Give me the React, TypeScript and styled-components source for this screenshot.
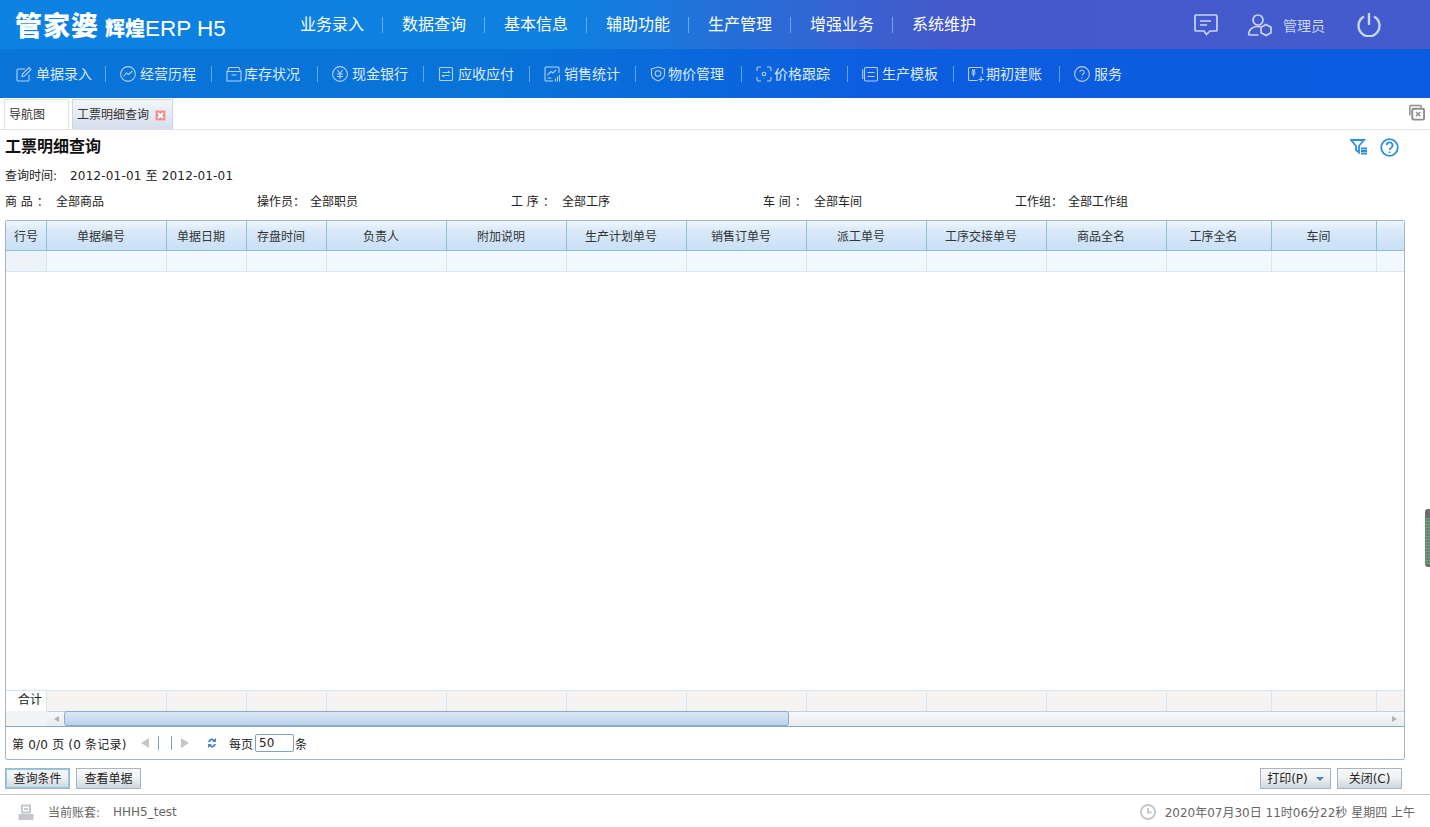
import React from "react";
import styled, { createGlobalStyle } from "styled-components";

const GlobalStyle = createGlobalStyle`
  html, body {
    margin: 0;
    padding: 0;
    height: 100%;
    overflow: hidden;
    background: #fff;
    font-family: "DejaVu Sans", "Noto Sans CJK SC", sans-serif;
    font-size: 12px;
    color: #222;
  }
  * { box-sizing: border-box; }
`;

const Page = styled.div`
  position: relative;
  width: 1430px;
  height: 827px;
  display: flex;
  flex-direction: column;
  overflow: hidden;
`;

const TopBar = styled.header`
  height: 49px;
  display: flex;
  align-items: center;
  background: linear-gradient(90deg, #0c82e2 0%, #0f80e0 40%, #4459cc 66%, #445bcd 100%);
  color: #fff;
`;

const Logo = styled.div`
  width: 300px;
  padding-left: 15px;
  display: flex;
  align-items: baseline;
  white-space: nowrap;
  font-family: "Noto Sans CJK SC", sans-serif;
`;
const LogoMain = styled.span`
  font-size: 27px;
  letter-spacing: 1px;
  font-weight: 900;
  line-height: 34px;
`;
const LogoSub = styled.span`
  font-size: 20px;
  font-weight: 900;
  margin-left: 6px;
`;
const LogoEn = styled.span`
  font-family: "Liberation Sans", sans-serif;
  font-size: 22.5px;
`;

const MainMenu = styled.nav`
  display: flex;
  align-items: center;
  flex: 1;
`;
const MainItem = styled.a`
  font-family: "Noto Sans CJK SC", sans-serif;
  font-size: 16px;
  line-height: 12px;
  height: 16px;
  width: 102px;
  padding-right: 38px;
  white-space: nowrap;
  position: relative;
  &:not(:last-child)::after {
    content: "";
    position: absolute;
    right: 19px;
    top: 0;
    height: 16px;
    width: 1px;
    background: rgba(140, 190, 245, 0.7);
  }
`;

const UserArea = styled.div`
  display: flex;
  align-items: center;
  padding-right: 49px;
  color: #c8d6f6;
`;
const UserName = styled.span`
  font-family: "Noto Sans CJK SC", sans-serif;
  font-size: 14px;
  margin-left: 10px;
  margin-right: 32px;
`;
const UserIcon = styled.svg<{ $gap?: number; $weight?: number }>`
  display: block;
  fill: none;
  stroke: #c8d6f6;
  stroke-width: ${(p) => p.$weight ?? 1.7};
  margin-right: ${(p) => p.$gap ?? 0}px;
`;

const SubBar = styled.nav`
  height: 49px;
  display: flex;
  align-items: center;
  padding-left: 16px;
  background: linear-gradient(90deg, #0874d8 0%, #0873d8 35%, #0d5de0 62%, #0d5be0 100%);
  color: #dfeafb;
`;
const SubItem = styled.a`
  display: flex;
  align-items: flex-start;
  width: 106px;
  height: 16px;
  font-family: "Noto Sans CJK SC", sans-serif;
  font-size: 14px;
  line-height: 14px;
  white-space: nowrap;
  position: relative;
  &:not(:last-child)::after {
    content: "";
    position: absolute;
    left: 89px;
    top: 0;
    height: 16px;
    width: 1px;
    background: rgba(130, 185, 240, 0.75);
  }
`;
const SubIcon = styled.svg<{ $first: boolean; $gap: number }>`
  width: 16px;
  height: 16px;
  margin-left: ${(p) => (p.$first ? 0 : -2)}px;
  margin-right: ${(p) => p.$gap}px;
  flex: none;
  fill: none;
  stroke: #b5cff3;
  stroke-width: 1.1;
`;

const TabBar = styled.div`
  height: 32px;
  display: flex;
  align-items: flex-end;
  padding-left: 4px;
  gap: 3px;
  border-bottom: 1px solid #e2e2e2;
  position: relative;
`;
const Tab = styled.div<{ $active?: boolean }>`
  height: 30px;
  width: ${(p) => (p.$active ? "101px" : "65px")};
  padding: 0 0 2px 4px;
  display: flex;
  align-items: center;
  gap: 6px;
  border: 1px solid #dcdcdc;
  border-color: ${(p) => (p.$active ? "#cdd5e2" : "#e2e2e2")};
  border-bottom: none;
  background: ${(p) => (p.$active ? "linear-gradient(#f4f6fa, #d5dfee)" : "#fff")};
  color: #333;
`;
const TabClose = styled.svg`
  width: 11px;
  height: 11px;
  display: block;
  margin-top: 4px;
`;
const CloseAll = styled.svg`
  position: absolute;
  right: 5px;
  top: 6px;
  width: 17px;
  height: 17px;
  fill: none;
  stroke: #8d8d8d;
  stroke-width: 1.6;
`;

const Content = styled.main`
  flex: 1;
  display: flex;
  flex-direction: column;
  padding: 0 25px 0 5px;
  min-height: 0;
`;
const TitleRow = styled.div`
  height: 31px;
  padding-bottom: 1px;
  display: flex;
  align-items: center;
  justify-content: space-between;
`;
const Title = styled.h1`
  margin: 0;
  font-family: "Noto Sans CJK SC", sans-serif;
  font-size: 16px;
  font-weight: 700;
  color: #111;
`;
const TitleTools = styled.div`
  display: flex;
  align-items: center;
  gap: 12px;
  padding-right: 6px;
  margin-top: 4px;
`;
const ToolIcon = styled.svg`
  display: block;
  fill: none;
  stroke: #2e8fe0;
  stroke-width: 1.8;
`;
const TimeRow = styled.div`
  height: 26px;
  display: flex;
  align-items: center;
  padding-top: 1px;
  color: #222;
`;
const TimeLabel = styled.span`
  width: 65px;
`;
const TimeValue = styled.span`
  letter-spacing: 0.18px;
`;
const FilterRow = styled.div`
  height: 26px;
  display: grid;
  grid-template-columns: 252px 254px 252px 252px 1fr;
  align-items: center;
`;
const FilterCell = styled.div`
  display: flex;
`;
const FilterLabel = styled.span<{ $w: number }>`
  width: ${(p) => p.$w}px;
  white-space: pre;
`;

const GridPanel = styled.section`
  margin-top: 7px;
  width: 1400px;
  height: 540px;
  flex: none;
  border: 1px solid #a3b7c9;
  border-radius: 2px;
  display: flex;
  flex-direction: column;
`;
const HeadRow = styled.div`
  height: 30px;
  display: flex;
  border-bottom: 1px solid #8fc0da;
  background: linear-gradient(#eef6fd 0%, #d9e9f8 35%, #c9e0f6 100%);
`;
const HeadCell = styled.div<{ $w?: number; $lead?: boolean }>`
  width: ${(p) => (p.$w ? `${p.$w}px` : "auto")};
  flex: ${(p) => (p.$w ? "none" : "1")};
  border-right: ${(p) => (p.$w ? "1px solid #8fc0da" : "none")};
  padding-right: ${(p) => (p.$lead ? 0 : 11)}px;
  display: flex;
  align-items: center;
  justify-content: center;
  color: #333;
`;
const DataRow = styled.div<{ $summary?: boolean }>`
  height: 21px;
  display: flex;
  background: ${(p) => (p.$summary ? "#f6f4f2" : "#f1f8fe")};
  border-top: ${(p) => (p.$summary ? "1px solid #d3e7f7" : "none")};
  border-bottom: ${(p) => (p.$summary ? "none" : "1px solid #d3e7f7")};
`;
const DataCell = styled.div<{ $w?: number; $lead?: boolean; $summary?: boolean }>`
  width: ${(p) => (p.$w ? `${p.$w}px` : "auto")};
  flex: ${(p) => (p.$w ? "none" : "1")};
  border-right: ${(p) => (p.$w ? "1px solid #d3e7f7" : "none")};
  background: ${(p) => (p.$lead ? (p.$summary ? "#fff" : "#edf3f9") : "transparent")};
  text-align: right;
  padding-right: 4px;
  line-height: 19px;
  color: #222;
`;
const EmptyBody = styled.div`
  flex: 1;
  background: #fff;
`;
const ScrollRow = styled.div`
  height: 16px;
  display: flex;
  border-bottom: 1px solid #8ba9bd;
`;
const ScrollLead = styled.div`
  width: 41px;
  background: #f2f3f5;
`;
const ScrollTrack = styled.div`
  flex: 1;
  display: flex;
  align-items: center;
  position: relative;
  background: linear-gradient(#f7f8f9, #e9ebee);
  border-top: 1px solid #c3cfe0;
  padding: 0 7px;
  justify-content: space-between;
`;
const ScrollThumb = styled.div`
  position: absolute;
  left: 17px;
  top: -1px;
  bottom: 0;
  width: 725px;
  border: 1px solid #8fa9d0;
  border-radius: 3px;
  background: linear-gradient(#dce8f6, #bcd2ea);
`;
const Arrow = styled.i<{ $dir: "left" | "right"; $size?: number; $color?: string; $gap?: number }>`
  display: block;
  width: 0;
  height: 0;
  margin-left: ${(p) => p.$gap ?? 0}px;
  border-style: solid;
  border-color: transparent;
  border-width: ${(p) => p.$size ?? 3}px;
  ${(p) => (p.$dir === "left" ? "border-left-width: 0;" : "border-right-width: 0;")}
  ${(p) => (p.$dir === "left" ? "border-right-width:" : "border-left-width:")} ${(p) => Math.round((p.$size ?? 3) * 1.6)}px;
  ${(p) => (p.$dir === "left" ? "border-right-color:" : "border-left-color:")} ${(p) => p.$color ?? "#aab4bf"};
`;
const Pager = styled.div`
  height: 32px;
  flex: none;
  display: flex;
  align-items: center;
  padding-left: 6px;
  color: #222;
`;
const PagerInfo = styled.span`
  width: 129px;
  white-space: nowrap;
  letter-spacing: 0.2px;
`;
const PagerBar = styled.span<{ $gap: number }>`
  width: 1px;
  height: 14px;
  margin-left: ${(p) => p.$gap}px;
  background: #7ea4bf;
`;
const RefreshIcon = styled.svg`
  margin-left: 18px;
  fill: #4f86c0;
`;
const PerPage = styled.span`
  margin-left: 12px;
`;
const PageInput = styled.input`
  width: 39px;
  height: 18px;
  margin: 0 1px 0 2px;
  padding: 0 3px;
  border: 1px solid #7ea4bf;
  border-radius: 2px;
  font: inherit;
  color: #222;
`;

const ActionRow = styled.div`
  height: 34px;
  flex: none;
  padding-top: 8px;
  width: 1397px;
  display: flex;
  align-items: flex-start;
  justify-content: space-between;
`;
const ActionGroup = styled.div`
  display: flex;
  gap: 6px;
`;
const ActionButton = styled.button<{ $w: number; $focus?: boolean }>`
  width: ${(p) => p.$w}px;
  height: 21px;
  padding: 0 0 2px;
  border: 1px solid #aab3c1;
  outline: ${(p) => (p.$focus ? "1px solid #7fd0f5" : "none")};
  outline-offset: -2px;
  background: linear-gradient(#f8f9fa, #f0f2f3 45%, #ccd6dc);
  font: inherit;
  color: #222;
  display: flex;
  align-items: center;
  justify-content: center;
  gap: 8px;
`;
const Caret = styled.i`
  width: 0;
  height: 0;
  margin-top: 2px;
  border: 4px solid transparent;
  border-top: 4px solid #4a7fc0;
  border-bottom: none;
`;

const Footer = styled.footer`
  height: 33px;
  flex: none;
  display: flex;
  align-items: center;
  justify-content: space-between;
  border-top: 1px solid #c3cad2;
  padding: 1px 15px 0 18px;
  color: #666;
`;
const FooterSide = styled.div`
  display: flex;
  align-items: center;
`;
const FooterIcon = styled.svg`
  width: 16px;
  height: 16px;
  display: block;
  fill: none;
  stroke: #c4c7cc;
  stroke-width: 2;
`;
const FooterLabel = styled.span`
  margin-left: 14px;
  width: 65px;
`;
const ClockText = styled.span`
  margin-left: 9px;
`;

const SideHandle = styled.div`
  position: absolute;
  right: 0;
  top: 509px;
  width: 5px;
  height: 58px;
  border-radius: 3px 0 0 3px;
  background: repeating-linear-gradient(#4fb577 0 1px, #777c7a 1px 3px);
  border-top: 9px solid #6c6c6c;
  border-bottom: 3px solid #6c6c6c;
`;

const mainMenus = ["业务录入", "数据查询", "基本信息", "辅助功能", "生产管理", "增强业务", "系统维护"];

const subIcons: React.ReactNode[] = [
  <><path d="M13 8.500V14a1 1 0 0 1-1 1H2a1 1 0 0 1-1-1V4a1 1 0 0 1 1-1h7" /><path d="M6 10.500 6.500 8l6.500-6.500 2 2L8.500 10z" /></>,
  <><circle cx="8" cy="8" r="7.400" /><path d="M3.500 10.500l3-3.500 2 1.500L12.500 5" /></>,
  <><path d="M1 5.500h14V15H1z" /><path d="M1.500 5.500 3 1.500h10l1.500 4" /><path d="M5.500 9h5" /></>,
  <><circle cx="8" cy="8" r="7.400" /><path d="M5.500 4 8 7.500 10.500 4M5 8h6M5 10.500h6M8 7.500V13" /></>,
  <><rect x="1.500" y="1.500" width="13" height="13" rx="1" /><path d="M4.500 6.500h7L10 5M11.500 9.500h-7L6 11" /></>,
  <><path d="M15 7V2a1 1 0 0 0-1-1H2a1 1 0 0 0-1 1v12a1 1 0 0 0 1 1h7" /><path d="M3.500 9l3.500-3.500 2 1.500 3-3M3.500 12h4M11.500 15.500v-3M13.500 15.500v-5M15.500 15.500V9" /></>,
  <><path d="M8 1l6.500 2v5.500c0 3-2.500 5-6.500 6.500-4-1.500-6.500-3.500-6.500-6.500V3z" /><circle cx="8" cy="7.500" r="2.800" /></>,
  <><path d="M1 5V2.500A1.500 1.500 0 0 1 2.500 1H5M11 1h2.500A1.500 1.500 0 0 1 15 2.500V5M15 11v2.500a1.500 1.500 0 0 1-1.500 1.500H11M5 15H2.500A1.500 1.500 0 0 1 1 13.500V11" /><circle cx="8" cy="8" r="1.800" /></>,
  <><rect x="2.500" y="1.500" width="13" height="13.500" rx="1.500" /><path d="M.7 3.500v9.500M5.500 6.500h7M5.500 10.500h7" /></>,
  <><path d="M14.500 8V2.500a1 1 0 0 0-1-1h-12a1 1 0 0 0-1 1v11a1 1 0 0 0 1 1h8" /><path d="M4 3.500 5.500 5 7 3.500M3.500 6h4M3.500 8h4M5.500 5v5.500M13 10.500v5.500M10.500 13.500h5.500" /></>,
  <><circle cx="8" cy="8" r="7.400" /><path d="M5.900 6.200a2.100 2.100 0 1 1 3.200 1.800c-.7.400-1.100.8-1.100 1.600" /><path d="M8 11.200v1.200" /></>,
];
const subMenus: [string, number][] = [
  ["单据录入", 4],
  ["经营历程", 4],
  ["库存状况", 2],
  ["现金银行", 4],
  ["应收应付", 4],
  ["销售统计", 4],
  ["物价管理", 2],
  ["价格跟踪", 2],
  ["生产模板", 4],
  ["期初建账", 2],
  ["服务", 4],
];

const columns: [string, number][] = [
  ["行号", 41],
  ["单据编号", 120],
  ["单据日期", 80],
  ["存盘时间", 80],
  ["负责人", 120],
  ["附加说明", 120],
  ["生产计划单号", 120],
  ["销售订单号", 120],
  ["派工单号", 120],
  ["工序交接单号", 120],
  ["商品全名", 120],
  ["工序全名", 105],
  ["车间", 105],
];

const filters: [string, string, number][] = [
  ["商 品 ：", "全部商品", 51],
  ["操作员：", "全部职员", 53],
  ["工 序 ：", "全部工序", 51],
  ["车 间 ：", "全部车间", 51],
  ["工作组：", "全部工作组", 53],
];

const App = () => {
  return (
    <Page>
      <GlobalStyle />
      <TopBar>
        <Logo>
          <LogoMain>管家婆</LogoMain>
          <LogoSub>辉煌</LogoSub>
          <LogoEn>ERP H5</LogoEn>
        </Logo>
        <MainMenu>
          {mainMenus.map((m) => (
            <MainItem key={m}>{m}</MainItem>
          ))}
        </MainMenu>
        <UserArea>
          <UserIcon width="26" height="24" viewBox="0 0 26 24" $gap={28}>
            <path d="M3 2h20a1 1 0 0 1 1 1v14a1 1 0 0 1-1 1h-6l-3.500 3.500L11 18H3a1 1 0 0 1-1-1V3a1 1 0 0 1 1-1z" />
            <path d="M7 8h11M7 12h7" />
          </UserIcon>
          <UserIcon width="26" height="24" viewBox="0 0 26 24">
            <circle cx="11" cy="7" r="5" />
            <path d="M1.500 22c0-5 3.500-8.500 9-8.500 1 0 2 .1 3 .5M1.500 22h10" />
            <path d="M19 11.500l5 2.800v5.400L19 22.500l-5-2.800v-5.400z" />
          </UserIcon>
          <UserName>管理员</UserName>
          <UserIcon width="24" height="25" viewBox="0 0 24 25" $weight={2.4}>
            <path d="M12 1v12" />
            <path d="M7 4.500a10.500 10.500 0 1 0 10 0" />
          </UserIcon>
        </UserArea>
      </TopBar>

      <SubBar>
        {subMenus.map(([m, gap], i) => (
          <SubItem key={m}>
            <SubIcon viewBox="0 0 16 16" $first={i === 0} $gap={gap}>{subIcons[i]}</SubIcon>
            {m}
          </SubItem>
        ))}
      </SubBar>

      <TabBar>
        <Tab>导航图</Tab>
        <Tab $active>
          工票明细查询
          <TabClose viewBox="0 0 11 11">
            <rect x="0" y="0" width="11" height="11" fill="#f3c4c4" />
            <rect x="1" y="1" width="9" height="9" fill="#e98d8f" />
            <path d="M3 3l5 5M8 3l-5 5" stroke="#fff" strokeWidth="2" />
          </TabClose>
        </Tab>
        <CloseAll viewBox="0 0 18 18">
          <path d="M2 12V2.500A1 1 0 0 1 3 1.500h10a1 1 0 0 1 1 1V4" />
          <rect x="4.500" y="5" width="12.500" height="11.500" rx="1.500" strokeWidth="2" />
          <path d="M8.500 8.500l4.500 4.500M13 8.500l-4.500 4.500" />
        </CloseAll>
      </TabBar>

      <Content>
        <TitleRow>
          <Title>工票明细查询</Title>
          <TitleTools>
            <ToolIcon width="18" height="18" viewBox="0 0 18 18">
              <path d="M1 2h13l-5 6v6.500L6 12V8z" />
              <path d="M11 10.500h6M11 13h6M11 15.500h6" />
            </ToolIcon>
            <ToolIcon width="19" height="19" viewBox="0 0 19 19">
              <circle cx="9.500" cy="9.500" r="8.300" />
              <path d="M6.700 7.300a2.900 2.900 0 1 1 4.400 2.400c-1 .6-1.600 1.100-1.600 2.300" />
              <path d="M9.500 13.500v1.500" />
            </ToolIcon>
          </TitleTools>
        </TitleRow>
        <TimeRow>
          <TimeLabel>查询时间:</TimeLabel>
          <TimeValue>2012-01-01 至 2012-01-01</TimeValue>
        </TimeRow>
        <FilterRow>
          {filters.map(([label, value, w]) => (
            <FilterCell key={label}>
              <FilterLabel $w={w}>{label}</FilterLabel>
              {value}
            </FilterCell>
          ))}
        </FilterRow>

        <GridPanel>
          <HeadRow>
            {columns.map(([name, w], i) => (
              <HeadCell key={name} $w={w} $lead={i === 0}>
                {name}
              </HeadCell>
            ))}
            <HeadCell />
          </HeadRow>
          <DataRow>
            {columns.map(([name, w], i) => (
              <DataCell key={name} $w={w} $lead={i === 0} />
            ))}
            <DataCell />
          </DataRow>
          <EmptyBody />
          <DataRow $summary>
            {columns.map(([name, w], i) => (
              <DataCell key={name} $w={w} $lead={i === 0} $summary>
                {i === 0 ? "合计" : ""}
              </DataCell>
            ))}
            <DataCell />
          </DataRow>
          <ScrollRow>
            <ScrollLead />
            <ScrollTrack>
              <Arrow $dir="left" />
              <ScrollThumb />
              <Arrow $dir="right" />
            </ScrollTrack>
          </ScrollRow>
          <Pager>
            <PagerInfo>第 0/0 页 (0 条记录)</PagerInfo>
            <Arrow $dir="left" $size={5} $color="#c2c8ce" />
            <PagerBar $gap={9} />
            <PagerBar $gap={12} />
            <Arrow $dir="right" $size={5} $color="#c2c8ce" $gap={9} />
            <RefreshIcon width="10" height="10" viewBox="0 0 10 10">
              <path d="M1 4a4 4 0 0 1 6.500-2.500L9 0v4H5l1.300-1.300A2.400 2.400 0 0 0 3 4zM9 6a4 4 0 0 1-6.500 2.500L1 10V6h4L3.700 7.300A2.400 2.400 0 0 0 7 6z" />
            </RefreshIcon>
            <PerPage>每页</PerPage>
            <PageInput defaultValue="50" />
            条
          </Pager>
        </GridPanel>

        <ActionRow>
          <ActionGroup>
            <ActionButton $w={65} $focus>查询条件</ActionButton>
            <ActionButton $w={65}>查看单据</ActionButton>
          </ActionGroup>
          <ActionGroup>
            <ActionButton $w={71}>
              打印(P)
              <Caret />
            </ActionButton>
            <ActionButton $w={65}>关闭(C)</ActionButton>
          </ActionGroup>
        </ActionRow>
      </Content>

      <Footer>
        <FooterSide>
          <FooterIcon viewBox="0 0 16 16">
            <path d="M4 1.500h8v7H4zM6 5h4" />
            <path d="M1.500 15v-4h13v4z" fill="#c4c7cc" />
          </FooterIcon>
          <FooterLabel>当前账套:</FooterLabel>
          HHH5_test
        </FooterSide>
        <FooterSide>
          <FooterIcon viewBox="0 0 16 16">
            <circle cx="8" cy="8" r="7" />
            <path d="M8 4v4.500h3.500" />
          </FooterIcon>
          <ClockText>2020年07月30日 11时06分22秒 星期四 上午</ClockText>
        </FooterSide>
      </Footer>

      <SideHandle />
    </Page>
  );
};

export default App;
